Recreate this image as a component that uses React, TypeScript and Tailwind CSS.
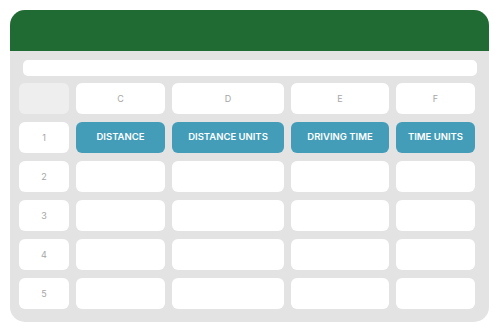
const columns = [
  { label: "C", width: "w-[89px]", title: "DISTANCE" },
  { label: "D", width: "w-[112px]", title: "DISTANCE UNITS" },
  { label: "E", width: "w-[98px]", title: "DRIVING TIME" },
  { label: "F", width: "w-[79px]", title: "TIME UNITS" },
];

const rows = [2, 3, 4, 5];

function Cell({ className = "", children }: { className?: string; children?: React.ReactNode }) {
  return (
    <div className={`h-[31px] shrink-0 rounded-[6px] flex items-center justify-center ${className}`}>
      {children}
    </div>
  );
}

export default function App() {
  return (
    <div
      className="w-[500px] h-[333px] bg-white pt-[10px] pl-[10px]"
      style={{ fontFamily: "Inter, 'Open Sans', sans-serif" }}
    >
      <div className="w-[479px] h-[312px] rounded-[15px] overflow-hidden bg-[#e3e3e3] flex flex-col">
        {/* title bar */}
        <div className="h-[41px] bg-[#1f6b33] shrink-0" />

        <div className="pl-[9px] pt-[9px] flex flex-col">
          {/* formula bar */}
          <div className="ml-[4px] w-[454px] h-[16px] rounded-[5px] bg-white" />

          <div className="mt-[7px] flex flex-col gap-[8px]">
            {/* column letters */}
            <div className="flex gap-[7px]">
              <Cell className="w-[50px] bg-[#eeeeee]" />
              {columns.map((c) => (
                <Cell key={c.label} className={`${c.width} bg-white text-[9px] text-[#a6a6a6]`}>
                  {c.label}
                </Cell>
              ))}
            </div>

            {/* header row */}
            <div className="flex gap-[7px]">
              <Cell className="w-[50px] bg-white text-[9px] text-[#a6a6a6]">1</Cell>
              {columns.map((c) => (
                <Cell
                  key={c.label}
                  className={`${c.width} bg-[#439db9] text-white text-[9.5px] font-semibold`}
                >
                  {c.title}
                </Cell>
              ))}
            </div>

            {rows.map((r) => (
              <div key={r} className="flex gap-[7px]">
                <Cell className="w-[50px] bg-white text-[9px] text-[#a6a6a6]">{r}</Cell>
                {columns.map((c) => (
                  <Cell key={c.label} className={`${c.width} bg-white`} />
                ))}
              </div>
            ))}
          </div>
        </div>
      </div>
    </div>
  );
}
